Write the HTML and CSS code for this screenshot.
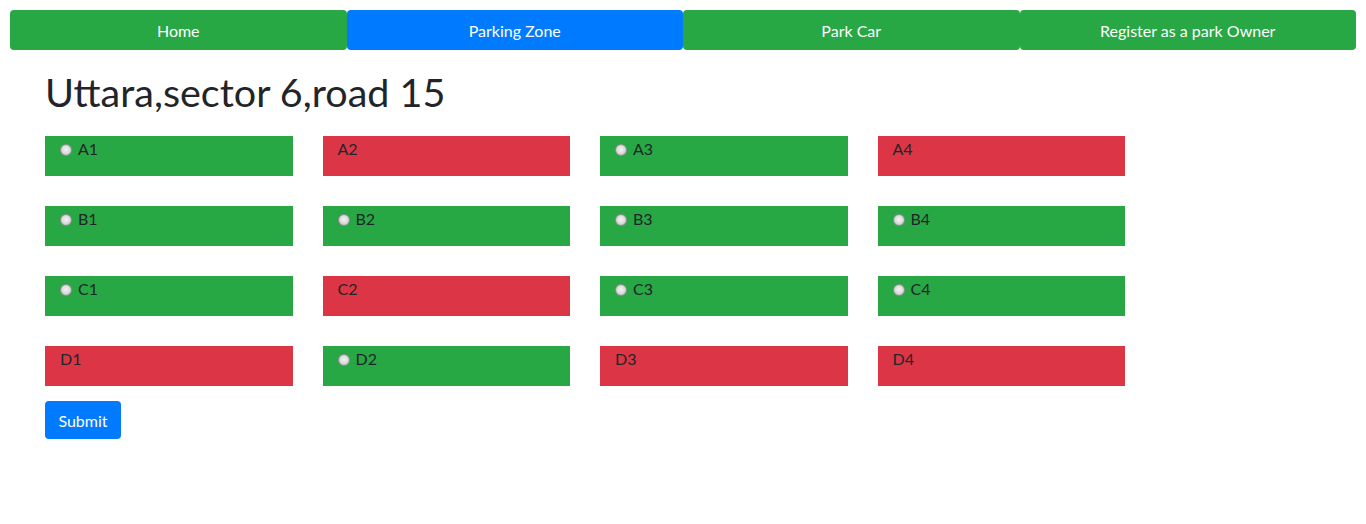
FILE: index.html
```html
<!DOCTYPE html>
<html>
<head>
<meta charset="utf-8">
<link rel="stylesheet" href="styles.css">
</head>
<body>
<nav class="nav">
  <a class="nav-btn green" href="#">Home</a>
  <a class="nav-btn blue" href="#">Parking Zone</a>
  <a class="nav-btn green" href="#">Park Car</a>
  <a class="nav-btn green" href="#">Register as a park Owner</a>
</nav>
<main class="content">
  <h1 class="title">Uttara,sector 6,road 15</h1>
  <form class="slots">
    <label class="slot free"><input type="radio" name="slot" class="radio">A1</label>
    <label class="slot taken">A2</label>
    <label class="slot free"><input type="radio" name="slot" class="radio">A3</label>
    <label class="slot taken">A4</label>

    <label class="slot free"><input type="radio" name="slot" class="radio">B1</label>
    <label class="slot free"><input type="radio" name="slot" class="radio">B2</label>
    <label class="slot free"><input type="radio" name="slot" class="radio">B3</label>
    <label class="slot free"><input type="radio" name="slot" class="radio">B4</label>

    <label class="slot free"><input type="radio" name="slot" class="radio">C1</label>
    <label class="slot taken">C2</label>
    <label class="slot free"><input type="radio" name="slot" class="radio">C3</label>
    <label class="slot free"><input type="radio" name="slot" class="radio">C4</label>

    <label class="slot taken">D1</label>
    <label class="slot free"><input type="radio" name="slot" class="radio">D2</label>
    <label class="slot taken">D3</label>
    <label class="slot taken">D4</label>
  </form>
  <button class="submit" type="button">Submit</button>
</main>
</body>
</html>
```
FILE: styles.css
```css
* { box-sizing: border-box; }
body {
  margin: 0;
  padding: 10px 10px 0;
  font-family: "Lato", "Liberation Sans", sans-serif;
  font-size: 16px;
  line-height: 1.5;
  color: #212529;
  background: #fff;
}
.nav {
  display: flex;
}
.nav-btn {
  flex: 1 1 0;
  height: 40px;
  padding-top: 2px;
  display: flex;
  align-items: center;
  justify-content: center;
  color: #fff;
  text-decoration: none;
  border-radius: 4px;
  font-size: 16px;
}
.green { background: #28a745; }
.blue { background: #007bff; }
.content {
  padding: 0 35px;
}
.title {
  margin: 18px 0 20px;
  font-size: 39.5px;
  font-weight: 400;
  line-height: 48px;
}
.slots {
  display: grid;
  grid-template-columns: repeat(4, 247.5px);
  column-gap: 30px;
  row-gap: 30px;
  margin: 0;
}
.slot {
  height: 40px;
  padding: 1px 15px 0;
  display: flex;
  align-items: flex-start;
  color: #212529;
}
.slot.free { background: #28a745; }
.slot.taken { background: #dc3545; }
.radio {
  appearance: none;
  -webkit-appearance: none;
  width: 12px;
  height: 12px;
  margin: 7px 6px 0 0;
  border-radius: 50%;
  border: 1px solid #8f8f8f;
  background: radial-gradient(circle at 50% 45%, #f4f4f4 0%, #dcdcdc 50%, #b0b0b0 100%);
  flex: none;
}
.submit {
  margin-top: 15px;
  background: #007bff;
  color: #fff;
  border: none;
  border-radius: 4px;
  padding: 7px 12px 5px;
  font: inherit;
  line-height: 1.5;
  height: 38px;
  width: 76px;
}
```
